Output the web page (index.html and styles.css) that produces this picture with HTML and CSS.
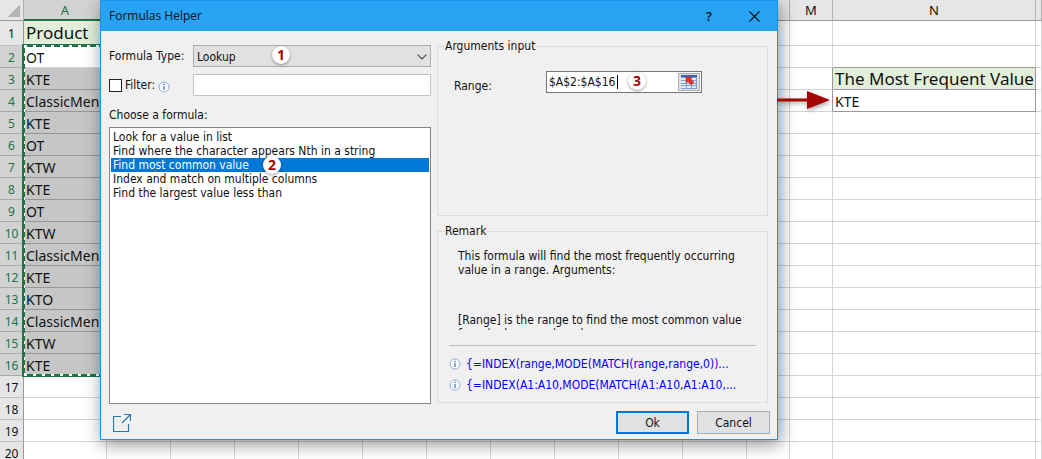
FILE: index.html
```html
<!DOCTYPE html>
<html lang="en">
<head>
<meta charset="utf-8">
<title>Formulas Helper</title>
<link rel="stylesheet" href="styles.css">
</head>
<body>
<main class="workspace">
  <table class="sheet">
    <colgroup>
      <col class="col-num"><col class="col-a">
      <col class="col-std"><col class="col-std"><col class="col-std"><col class="col-std"><col class="col-std">
      <col class="col-std"><col class="col-std"><col class="col-std"><col class="col-std"><col class="col-std">
      <col class="col-narrow"><col class="col-narrow"><col class="col-n"><col>
    </colgroup>
    <thead><tr id="letters"><th class="corner"></th></tr></thead>
    <tbody id="rows"></tbody>
  </table>
  <div class="marquee"></div>

  <section class="dialog" role="dialog" aria-labelledby="dialog-title">
    <header class="titlebar">
      <h1 class="title" id="dialog-title">Formulas Helper</h1>
      <button class="title-btn help" type="button" aria-label="Help">?</button>
      <button class="title-btn" type="button" aria-label="Close">
        <svg width="11" height="11" viewBox="0 0 11 11"><path d="M.5.5l10 10M10.5.5l-10 10" fill="none" stroke="#111" stroke-width="1.1"/></svg>
      </button>
    </header>

    <form class="body">
      <div class="left">
        <div class="row">
          <label class="row-label" for="type">Formula Type:</label>
          <div class="field">
            <select class="combo" id="type"><option>Lookup</option></select>
            <svg class="chevron" width="10" height="6" viewBox="0 0 10 6"><path d="M.7.7L5 5 9.300.7" fill="none" stroke="#444" stroke-width="1.1"/></svg>
            <span class="badge badge-1">1</span>
          </div>
        </div>
        <div class="row">
          <div class="row-label filter">
            <input class="check" type="checkbox" id="use-filter"><label for="use-filter">Filter:</label>
            <svg class="info info-filter" width="12" height="12" viewBox="0 0 12 12"><circle cx="6" cy="6" r="5" fill="#f8fbff" stroke="#92b1dc"/><path d="M6 5v4M6 2.800v1.200" stroke="#456fae" stroke-width="1.200"/></svg>
          </div>
          <input class="text-input" type="text" aria-label="Filter text">
        </div>
        <label class="list-label" for="formulas">Choose a formula:</label>
        <div class="list-wrap">
          <select class="list" id="formulas" size="5">
            <option>Look for a value in list</option>
            <option>Find where the character appears Nth in a string</option>
            <option selected>Find most common value</option>
            <option>Index and match on multiple columns</option>
            <option>Find the largest value less than</option>
          </select>
          <span class="badge badge-2">2</span>
        </div>
        <button class="popout" type="button" aria-label="Open in new window">
          <svg width="18" height="18" viewBox="0 0 18 18"><path d="M8 2.500H.5v15h15V10M9 9l8-8M11 .5h6.500V7" fill="none" stroke="#2e75b6" stroke-width="1.200"/></svg>
        </button>
      </div>

      <div class="right">
        <fieldset class="group arguments">
          <legend>Arguments input</legend>
          <div class="range-row">
            <label class="range-label" for="range">Range:</label>
            <div class="range-box">
              <input class="range-input" type="text" id="range" value="$A$2:$A$16">
              <span class="caret"></span>
              <span class="badge badge-3">3</span>
              <button class="picker" type="button" aria-label="Select range">
                <svg width="16" height="14" viewBox="0 0 16 14"><rect width="16" height="14" fill="#7d9fd0"/><path d="M0 0h16v2H0z" fill="#3566b8"/><path d="M0 3h5v2H0zM6 3h4v2H6zM11 3h4v2h-4zM0 6h5v2H0zM6 6h4v2H6zM11 6h4v2h-4zM0 9h5v1H0zM6 9h4v1H6zM11 9h4v1h-4zM0 11h5v2H0zM6 11h4v2H6zM11 11h4v2h-4z" fill="#dfeaf8"/><path d="M5 2h6L9.500 4l3.500 3-3 3-3-3.500L5 8z" fill="#e03024" stroke="#a8332b" stroke-width=".5"/></svg>
              </button>
            </div>
          </div>
        </fieldset>
        <fieldset class="group remark">
          <legend>Remark</legend>
          <div class="remark-text">
            <p class="intro">This formula will find the most frequently occurring<br>value in a range. Arguments:</p>
            <p class="detail">[Range] is the range to find the most common value<br>from (only one column)</p>
          </div>
          <div class="examples">
            <a class="example" href="#generic">
              <svg class="info" width="12" height="12" viewBox="0 0 12 12"><circle cx="6" cy="6" r="5" fill="#f8fbff" stroke="#92b1dc"/><path d="M6 5v4M6 2.800v1.200" stroke="#456fae" stroke-width="1.200"/></svg>
              <span>{=INDEX(range,MODE(MATCH(range,range,0))...</span></a>
            <a class="example" href="#sample">
              <svg class="info" width="12" height="12" viewBox="0 0 12 12"><circle cx="6" cy="6" r="5" fill="#f8fbff" stroke="#92b1dc"/><path d="M6 5v4M6 2.800v1.200" stroke="#456fae" stroke-width="1.200"/></svg>
              <span>{=INDEX(A1:A10,MODE(MATCH(A1:A10,A1:A10,...</span></a>
          </div>
        </fieldset>
        <div class="actions">
          <button class="btn primary" type="button">Ok</button>
          <button class="btn" type="button">Cancel</button>
        </div>
      </div>
    </form>
    <svg class="arrow" width="54" height="20" viewBox="0 0 54 20"><path d="M0 8.500h30V1l23 9-23 9v-7.500H0z" fill="#a50404"/></svg>
  </section>
</main>
<script src="sheet.js"></script>
</body>
</html>
```
FILE: styles.css
```css
* { box-sizing: border-box; }

body {
  margin: 0;
  background: #fff;
  color: #111;
  font: 12px/14px "DejaVu Sans Condensed", "DejaVu Sans", Tahoma, sans-serif;
}

button, input, select { font: inherit; color: inherit; }

.workspace {
  position: relative;
  height: 100vh;
  overflow: hidden;
}

/* Worksheet */
.sheet {
  width: 100%;
  table-layout: fixed;
  border-collapse: separate;
  border-spacing: 0;
  font: 14px/18px "Noto Sans", "Open Sans", sans-serif;
}
.col-num { width: 24px; }
.col-a { width: 83px; }
.col-std { width: 64px; }
.col-narrow { width: 43px; }
.col-n { width: 203px; }

.sheet th, .sheet td {
  height: 22px;
  padding: 2px 0 0 2px;
  border: 0 solid #d4d4d4;
  border-width: 0 1px 1px 0;
  text-align: left;
  white-space: nowrap;
  overflow: hidden;
}
.sheet thead th {
  height: 21px;
  padding: 0;
  background: #e6e6e6;
  border-color: #b0b0b0 #b0b0b0 #999;
  text-align: center;
  font-size: 13px;
  font-weight: 400;
}
.sheet thead .corner {
  background: linear-gradient(135deg, transparent 50%, #b5b5b5 50%) 8px 5px / 12px 12px no-repeat #e6e6e6;
}
.sheet thead .picked {
  background: #d2d2d2;
  border-bottom: 2px solid #217346;
  color: #217346;
}
.sheet tbody th {
  padding: 2px 0 0;
  background: #e6e6e6;
  border-color: #c0c0c0 #999 #c0c0c0 #999;
  text-align: center;
  font-size: 12px;
  font-weight: 400;
}
.sheet tbody .picked {
  background: #d2d2d2;
  border-bottom-color: #a8a8a8;
  color: #217346;
}
.sheet .tall th, .sheet .tall td { height: 25px; }
.sheet .selected { background: #c6c6c6; border-bottom-color: #969696; }
.sheet .heading { background: #e2efda; font-size: 17px; padding-top: 0; }
.sheet .result { border-color: #999; }
.sheet .edge-right { border-right-color: #999; }
.sheet .edge-bottom { border-bottom-color: #999; }

.marquee {
  position: absolute;
  left: 22px;
  top: 44px;
  width: 86px;
  height: 333px;
  border: 3px solid #217346;
}
.marquee::before {
  content: "";
  position: absolute;
  inset: -2px 0 -2px -1px;
  background:
    repeating-linear-gradient(90deg, #fff 0 3px, transparent 3px 9px) 0 0 / 100% 2px no-repeat,
    repeating-linear-gradient(90deg, #fff 0 3px, transparent 3px 9px) 0 100% / 100% 2px no-repeat,
    repeating-linear-gradient(180deg, #fff 0 3px, transparent 3px 8px) 0 0 / 1px 100% no-repeat;
}

/* Dialog window */
.dialog {
  position: absolute;
  left: 100px;
  right: 264px;
  top: 0;
  border: 1px solid #1593ee;
  background: #f0f0f0;
  box-shadow: 2px 4px 16px rgba(0, 0, 0, .45);
}
.titlebar {
  display: flex;
  align-items: center;
  height: 30px;
  padding: 0 8px;
  background: #26a3f2;
}
.title {
  flex: 1;
  margin: 0;
  font: 400 12px/16px "Open Sans", "Noto Sans", sans-serif;
}
.title-btn {
  display: grid;
  place-items: center;
  width: 30px;
  height: 28px;
  padding: 0;
  border: 0;
  background: none;
}
.help { margin-right: 15px; font: 600 13px/16px "Open Sans", "Noto Sans", sans-serif; }

.body {
  display: grid;
  grid-template-columns: 322px 1fr;
  column-gap: 6px;
  padding: 8px 8px 5px;
}
.left { padding-top: 6px; }
.row { display: flex; align-items: center; height: 22px; margin-bottom: 7px; }
.row-label { flex: 0 0 84px; }
.filter { display: flex; align-items: center; gap: 3px; }
.check {
  appearance: none;
  width: 13px;
  height: 13px;
  margin: 0;
  border: 1px solid #222;
  background: #fff;
}
.info { display: block; flex: none; }
.info-filter { margin-top: 3px; }
.field { position: relative; flex: 1; }
.combo {
  appearance: none;
  display: block;
  width: 100%;
  height: 22px;
  padding: 1px 3px 0;
  border: 1px solid #adadad;
  border-radius: 0;
  background: #e1e1e1;
}
.chevron { position: absolute; right: 4px; top: 9px; pointer-events: none; }
.text-input {
  flex: 1;
  min-width: 0;
  height: 22px;
  border: 1px solid #c4c4c4;
  background: #fff;
}
.list-label { display: block; margin: 12px 0 5px; }
.list-wrap { position: relative; }
.list {
  display: block;
  width: 100%;
  height: 277px;
  padding: 2px 1px 1px;
  border: 1px solid #828790;
  border-radius: 0;
  background: #fff;
  outline: 0;
}
.list option { height: 14px; min-height: 14px; padding: 0 2px; line-height: 14px; }
.list option:checked { background: linear-gradient(#0078d7, #0078d7); color: #fff; }
.popout {
  display: block;
  margin: 10px 0 0 4px;
  padding: 0;
  border: 0;
  background: none;
}
.popout svg { display: block; }

.right { display: flex; flex-direction: column; }
.group {
  min-width: 0;
  margin: 0 1px 0 0;
  padding: 0;
  border: 1px solid #dcdcdc;
}
.group legend { margin-left: 6px; padding: 0 1px; line-height: 14px; }
.arguments { height: 177px; margin-bottom: 8px; }
.range-row { display: flex; align-items: center; padding: 18px 0 0 16px; }
.range-label { flex: 0 0 92px; padding-top: 8px; }
.range-box {
  position: relative;
  display: flex;
  align-items: center;
  width: 156px;
  height: 22px;
  padding-right: 1px;
  border: 1px solid #767676;
  background: #fff;
}
.range-input { flex: 1; min-width: 0; padding: 0 2px; border: 0; outline: 0; background: none; }
.caret { position: absolute; left: 70px; top: 3px; width: 1px; height: 14px; background: #000; }
.picker {
  display: grid;
  place-items: center;
  width: 22px;
  height: 18px;
  padding: 0;
  border: 1px solid #adadad;
  background: #e1e1e1;
}

.remark { height: 179px; }
.remark-text { height: 92px; padding: 11px 0 0 20px; overflow: hidden; white-space: nowrap; }
.remark-text p { margin: 0; }
.remark-text .intro { height: 64px; }
.examples {
  display: grid;
  gap: 7px;
  margin: 15px 11px 0;
  padding-top: 11px;
  border-top: 1px solid #bcbcbc;
}
.example { display: flex; align-items: center; gap: 5px; color: #00f; text-decoration: none; white-space: nowrap; }

.actions { display: flex; justify-content: flex-end; gap: 8px; margin: 8px -1px 0 0; }
.btn {
  width: 73px;
  height: 23px;
  padding: 0;
  border: 1px solid #adadad;
  background: #e1e1e1;
}
.primary { border: 2px solid #0078d7; }

/* Callouts */
.badge {
  position: absolute;
  width: 18px;
  height: 18px;
  border-radius: 50%;
  background: #fff;
  box-shadow: 0 1px 3px rgba(0, 0, 0, .4);
  color: #a50404;
  font: 700 14px/18px "Noto Sans", sans-serif;
  text-align: center;
}
.badge-1 { left: 79px; top: 1px; }
.badge-2 { left: 154px; top: 29px; }
.badge-3 { left: 81px; top: 0; }
.arrow { position: absolute; left: 100%; top: 89px; filter: drop-shadow(1px 2px 2px rgba(0, 0, 0, .35)); }
```
FILE: sheet.js
```
var products = ["Product", "OT", "KTE", "ClassicMenu", "KTE", "OT", "KTW", "KTE", "OT", "KTW",
  "ClassicMenu", "KTE", "KTO", "ClassicMenu", "KTW", "KTE"];
// Columns B to L lie behind the dialog and carry no letter.
var columns = "ABCDEFGHIJKLMNO".split("");
var rowCount = 20;

function cell(tag, text, className) {
  var el = document.createElement(tag);
  el.textContent = text || "";
  if (className) el.className = className;
  return el;
}

columns.forEach(function (name) {
  var shown = "AMN".indexOf(name) >= 0;
  document.getElementById("letters").appendChild(cell("th", shown ? name : "", name === "A" ? "picked" : ""));
});

for (var r = 1; r <= rowCount; r++) {
  var tr = document.createElement("tr");
  if (r === 1) tr.className = "tall";
  tr.appendChild(cell("th", String(r), r > 1 && r <= 16 ? "picked" : ""));
  columns.forEach(function (name) {
    var text = "", style = "";
    if (name === "A") {
      text = products[r - 1];
      style = r === 1 ? "heading" : r > 2 && r <= 16 ? "selected" : "";
    } else if (name === "N" && r === 3) {
      text = "The Most Frequent Value";
      style = "heading result";
    } else if (name === "N" && r === 4) {
      text = "KTE";
      style = "result";
    } else if (name === "M" && (r === 3 || r === 4)) {
      style = "edge-right";
    } else if (name === "N" && r === 2) {
      style = "edge-bottom";
    }
    tr.appendChild(cell("td", text, style));
  });
  document.getElementById("rows").appendChild(tr);
}
```
